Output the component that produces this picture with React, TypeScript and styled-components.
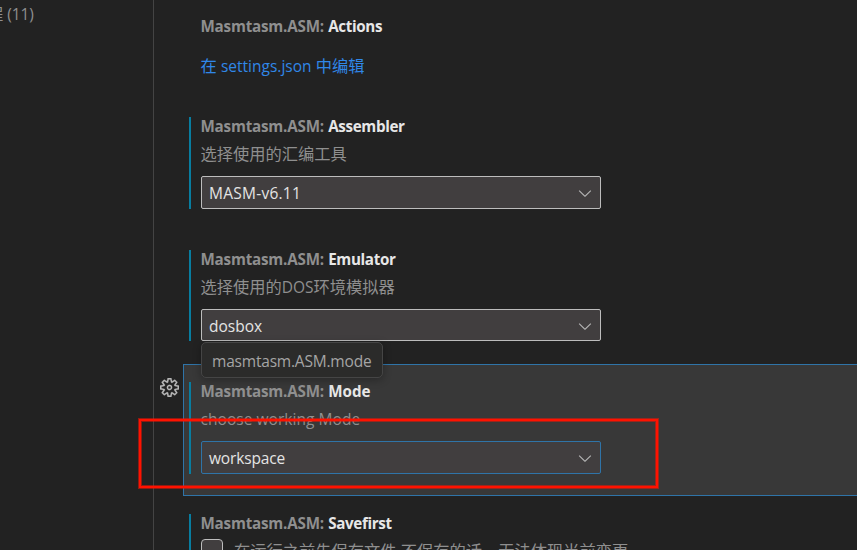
import React from "react";
import styled, { createGlobalStyle } from "styled-components";
import { VscChevronDown, VscSettingsGear } from "react-icons/vsc";

const GlobalStyle = createGlobalStyle`
  * { box-sizing: border-box; }
  body { margin: 0; background: #222222; overflow: hidden; }
`;

const Editor = styled.div`
  position: relative;
  display: flex;
  width: 857px;
  height: 550px;
  overflow: hidden;
  background: #222222;
  color: #8f8f8f;
  font-family: "Open Sans", "Noto Sans CJK SC", sans-serif;
  font-size: 16.25px;
  white-space: pre;
`;

const Sidebar = styled.aside`
  flex: none;
  width: 154px;
  border-right: 1px solid #444444;
`;

const TocEntry = styled.div`
  display: flex;
  margin-left: -13px;
  padding-top: 4px;
  height: 24px;
  line-height: 20px;
`;

const Count = styled.span`
  margin-left: 4px;
  font-size: 15.5px;
  letter-spacing: -0.1px;
`;

const SettingsList = styled.main`
  flex: 1;
  min-width: 0;
  display: flex;
  flex-direction: column;
  margin-top: -1px;
`;

const Row = styled.section<{ $height: number }>`
  flex: none;
  display: flex;
  height: ${(p) => p.$height}px;
`;

const Gutter = styled.div`
  flex: none;
  width: 29px;
  padding: 14px 0 0 6px;
  color: #b8b8b8;
  svg { display: block; stroke: currentColor; stroke-width: 0.25px; }
`;

const Item = styled.div<{ $focused?: boolean }>`
  flex: 1;
  min-width: 0;
  padding: 17px 0 0 5px;
  border: 1px solid ${(p) => (p.$focused ? "#2f74a8" : "transparent")};
  border-right: 0;
  background: ${(p) => (p.$focused ? "#383838" : "transparent")};
`;

const Contents = styled.div<{ $modified?: boolean; $height: number }>`
  display: flex;
  flex-direction: column;
  height: ${(p) => p.$height}px;
  padding-left: 10px;
  border-left: 2px solid ${(p) => (p.$modified ? "#087da0" : "transparent")};
`;

const Title = styled.h3`
  flex: none;
  margin: 0 0 0 -0.5px;
  height: 20px;
  line-height: 18px;
  font-size: 15.2px;
  font-weight: 700;
`;

const Category = styled.span`
  display: inline-block;
  width: 127.7px;
  letter-spacing: -0.2px;
`;

const Label = styled.span<{ $spacing: number }>`
  color: #e7e7e7;
  letter-spacing: ${(p) => p.$spacing}px;
`;

const Description = styled.div`
  flex: none;
  height: 24px;
  margin: 5px 0 10px -0.5px;
  line-height: 24px;
`;

const Latin = styled.span<{ $spacing?: number }>`
  font-size: 15.5px;
  letter-spacing: ${(p) => p.$spacing ?? 0}px;
`;

const EditLink = styled.a`
  margin: 17px 0 0 -0.5px;
  line-height: 24px;
  color: #3087e8;
`;

const Select = styled.div<{ $focused?: boolean; $height?: number }>`
  flex: none;
  display: flex;
  align-items: center;
  justify-content: space-between;
  width: 400px;
  height: ${(p) => p.$height ?? 33}px;
  padding: 1px 5px 0 7px;
  border: 1px solid ${(p) => (p.$focused ? "#2f74a8" : "#bdbdbd")};
  border-radius: 2px;
  background: #413e3f;
  color: #e4e4e4;
  svg { color: #b4b4b4; }
`;

const CheckRow = styled.div`
  display: flex;
  margin-top: 5px;
  line-height: 24px;
`;

const Checkbox = styled.span`
  width: 22px;
  height: 22px;
  margin-right: 11px;
  border: 1px solid #bdbdbd;
  border-radius: 4px;
  background: #413e3f;
`;

const Tooltip = styled.div`
  position: absolute;
  left: 201px;
  top: 342px;
  width: 182px;
  height: 36px;
  padding-left: 10px;
  border: 1px solid #454545;
  border-radius: 5px;
  background: #2b2b2a;
  box-shadow: 0 2px 8px rgba(0, 0, 0, 0.3);
  color: #a5a5a5;
  line-height: 36px;
`;

const Highlight = styled.div`
  position: absolute;
  left: 139px;
  top: 419px;
  width: 519px;
  height: 69px;
  border: 2px solid #ff1200;
  box-shadow: 0 0 0 1px rgba(255, 18, 0, 0.5), inset 0 0 0 1px rgba(255, 18, 0, 0.5);
`;

interface SettingProps {
  name: string;
  spacing?: number;
  height?: number;
  contentHeight?: number;
  modified?: boolean;
  focused?: boolean;
  children: React.ReactNode;
}

function Setting({
  name,
  spacing = -0.35,
  height = 133,
  contentHeight = 92,
  modified = true,
  focused,
  children,
}: SettingProps) {
  return (
    <Row $height={height}>
      <Gutter>{focused && <VscSettingsGear size={19} />}</Gutter>
      <Item $focused={focused}>
        <Contents $modified={modified} $height={contentHeight}>
          <Title>
            <Category>Masmtasm.ASM:</Category>
            <Label $spacing={spacing}>{name}</Label>
          </Title>
          {children}
        </Contents>
      </Item>
    </Row>
  );
}

export default function App() {
  return (
    <Editor>
      <GlobalStyle />
      <Sidebar>
        <TocEntry>程<Count>(11)</Count></TocEntry>
      </Sidebar>
      <SettingsList>
        <Setting name="Actions" height={100} contentHeight={70} modified={false}>
          <EditLink>在 <Latin>settings.json</Latin> 中编辑</EditLink>
        </Setting>
        <Setting name="Assembler">
          <Description>选择使用的汇编工具</Description>
          <Select><Latin $spacing={0.25}>MASM-v6.11</Latin><VscChevronDown size={20} /></Select>
        </Setting>
        <Setting name="Emulator" height={132} contentHeight={91}>
          <Description>选择使用的<Latin>DOS</Latin>环境模拟器</Description>
          <Select $height={32}><Latin>dosbox</Latin><VscChevronDown size={20} /></Select>
        </Setting>
        <Setting name="Mode" spacing={0} height={132} focused>
          <Description><Latin $spacing={0.05}>choose working Mode</Latin></Description>
          <Select $focused><Latin $spacing={-0.15}>workspace</Latin><VscChevronDown size={20} /></Select>
        </Setting>
        <Setting name="Savefirst">
          <CheckRow>
            <Checkbox />
            <span>在运行之前先保存文件,不保存的话，无法体现当前变更</span>
          </CheckRow>
        </Setting>
      </SettingsList>
      <Tooltip><Latin $spacing={-0.2}>masmtasm.ASM.mode</Latin></Tooltip>
      <Highlight />
    </Editor>
  );
}
